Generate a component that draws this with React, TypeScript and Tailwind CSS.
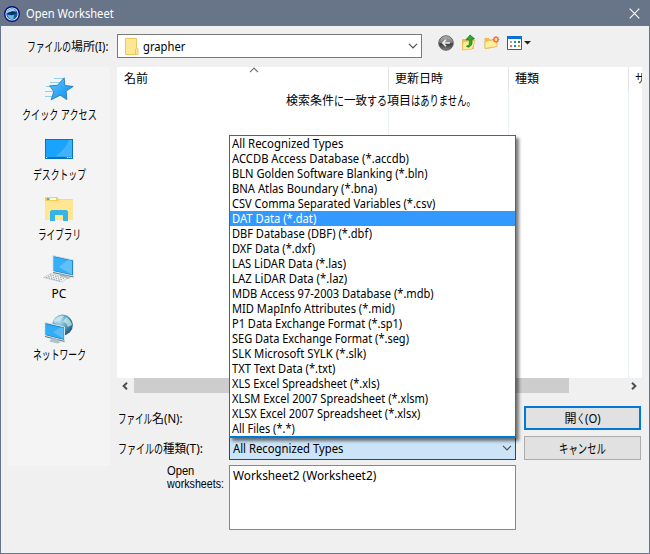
import { useLayoutEffect, useRef, useState, type ReactNode } from "react";

/** Single line of text condensed or widened horizontally to a given width. */
function Fit({ w, children, className = "" }: { w: number; children: ReactNode; className?: string }) {
  const ref = useRef<HTMLSpanElement>(null);
  const [scale, setScale] = useState(1);
  useLayoutEffect(() => {
    if (ref.current) setScale(w / ref.current.offsetWidth);
  }, [w]);
  return (
    <span className={"block shrink-0 whitespace-pre " + className} style={{ width: w }}>
      <span ref={ref} className="inline-block origin-left" style={{ transform: `scaleX(${scale})` }}>
        {children}
      </span>
    </span>
  );
}

const fileTypes: [string, number][] = [
  ["All Recognized Types", 111],
  ["ACCDB Access Database (*.accdb)", 177],
  ["BLN Golden Software Blanking (*.bln)", 196],
  ["BNA Atlas Boundary (*.bna)", 145],
  ["CSV Comma Separated Variables (*.csv)", 203],
  ["DAT Data (*.dat)", 84],
  ["DBF Database (DBF) (*.dbf)", 140],
  ["DXF Data (*.dxf)", 83],
  ["LAS LiDAR Data (*.las)", 114],
  ["LAZ LiDAR Data (*.laz)", 115],
  ["MDB Access 97-2003 Database (*.mdb)", 202],
  ["MID MapInfo Attributes (*.mid)", 163],
  ["P1 Data Exchange Format (*.sp1)", 170],
  ["SEG Data Exchange Format (*.seg)", 177],
  ["SLK Microsoft SYLK (*.slk)", 134],
  ["TXT Text Data (*.txt)", 103],
  ["XLS Excel Spreadsheet (*.xls)", 148],
  ["XLSM Excel 2007 Spreadsheet (*.xlsm)", 196],
  ["XLSX Excel 2007 Spreadsheet (*.xlsx)", 188],
  ["All Files (*.*)", 63],
];

function Chevron({ className = "" }: { className?: string }) {
  return (
    <svg className={className} width="10" height="6" viewBox="0 0 10 6" fill="none" stroke="#505050" strokeWidth="1.2">
      <path d="M1 .8 5 4.8 9 .8" />
    </svg>
  );
}

function ScrollArrow({ className = "" }: { className?: string }) {
  return (
    <svg className={className} width="6" height="8" viewBox="0 0 6 8" fill="none" stroke="#505050" strokeWidth="2">
      <path d="M5 .7 1.6 4 5 7.3" />
    </svg>
  );
}

function AppIcon() {
  return (
    <svg width="16" height="16" viewBox="0 0 16 16">
      <circle cx="8" cy="8" r="7.3" fill="#eaf7fc" stroke="#090a84" strokeWidth="1.4" />
      <circle cx="8" cy="8" r="5.7" fill="#155c9c" />
      <path d="M2.5 7C3.5 4 6 2.3 9 2.5L13 5.5 8 5 4 7.3Z" fill="#8fd0ec" />
      <path d="M3 7.6C5 5.6 9 5 13.2 7L9.6 8.2 8 9.4Z" fill="#07306a" />
      <path d="M3.4 9 8 9.3 10 8.8 9.4 13.2C6.5 13.6 4.2 12 3.4 9Z" fill="#69b9dd" />
    </svg>
  );
}

function StarIcon() {
  return (
    <svg width="32" height="26" viewBox="0 0 32 26">
      <defs>
        <linearGradient id="star" x1="0" y1="0" x2="1" y2="1">
          <stop offset="0" stopColor="#62c7ff" />
          <stop offset="1" stopColor="#078bea" />
        </linearGradient>
      </defs>
      <path d="M11 2.5H20M7 6.5H18M3 10.5H11M2 15.5H11M2 20.5H9" stroke="#8dc9ec" strokeWidth=".9" />
      <path d="M21.2 1.8 21.8 9.4 30.2 10.5 23.2 15.1 23.8 23.6 17.2 19.2 8.2 23.8 10.8 15.5 6.6 9.8 14.5 9.3Z" fill="url(#star)" stroke="#1576b9" strokeWidth=".8" />
    </svg>
  );
}

function DesktopIcon() {
  return (
    <svg width="28" height="20" viewBox="0 0 28 20">
      <rect x=".5" y=".5" width="27" height="19" fill="#19a3ff" stroke="#0875b9" />
      <path d="M10 17.5Q20 11 24 1H27V17.5Z" fill="#42b2fc" />
      <path d="M1 18.5H27" stroke="#0672b4" />
      <path d="M1 18.5H2.2M21.8 18.5H22.8M23.7 18.5H24.7M25.6 18.5H26.6" stroke="white" />
    </svg>
  );
}

function LibraryIcon() {
  return (
    <svg width="28" height="24" viewBox="0 0 28 24">
      <path d="M0 1Q0 0 1 0H12Q13 0 13.5 2H27Q28 2 28 3V22Q28 23 27 23H1Q0 23 0 22Z" fill="#f6cd57" />
      <path d="M2 1.2H11V3H2Z" fill="#fff" />
      <path d="M2 1.2H4.5V3H2Z" fill="#29aadd" />
      <path d="M0 4H13L15 2.5H27Q28 2.5 28 3.5V22Q28 23 27 23H0Z" fill="#ffe693" />
      <path d="M5 14.5 6.5 13H21.5L23 14.5V24H18V18H10V24H5Z" fill="#36b4e5" />
    </svg>
  );
}

function ComputerIcon() {
  return (
    <svg width="32" height="28" viewBox="0 0 32 28">
      <path d="M10 .5 30.5 5V21L10 16.5Z" fill="#2587c6" stroke="#dce5e9" />
      <path d="M11 2 29 6V19.5L11 15.5Z" fill="#35aff8" />
      <path d="M16 12 25 5 29 6V19.5Z" fill="#60c1fa" />
      <path d="M10 17 30.5 21.5V22.6L10 18.1Z" fill="#607884" />
      <path d="M18 19.2 24 20.5V22L28 22.8 25 24 16 21.6Z" fill="#a2b4bb" />
      <path d="M8 18.5 24.5 23 19 27 .5 22.5Z" fill="#f8fafa" stroke="#acb7bb" strokeWidth=".6" />
      <path d="M7 19.8 22 23.8M5 21.1 20 25.1M3 22.3 18 26.3" stroke="#929fa5" strokeDasharray="1.6 1" />
    </svg>
  );
}

function NetworkIcon() {
  return (
    <svg width="30" height="30" viewBox="0 0 30 30">
      <defs>
        <radialGradient id="globe" cx=".35" cy=".3" r=".7">
          <stop offset="0" stopColor="#b8e4f2" />
          <stop offset=".55" stopColor="#55a6c5" />
          <stop offset="1" stopColor="#245f83" />
        </radialGradient>
      </defs>
      <circle cx="18.5" cy="11" r="10.4" fill="url(#globe)" />
      <path d="M12 4Q16 1 20 2L18 5 14 7 11 9 9 7ZM22 3Q27 6 28 11L24 13 22 9 19 8Z" fill="#deeff0" opacity=".65" />
      <path d="M1 8.5 20.5 13V26.5L1 21.5Z" fill="#1775ba" stroke="#d9e5e9" />
      <path d="M2 10 19.5 14V25L2 20.8Z" fill="#32adf5" />
      <path d="M9 18 17 13.5 19.5 14V25Z" fill="#5abbf5" />
      <path d="M1 22 20.5 27V28L1 23Z" fill="#557785" />
      <path d="M8 24 14 25.5V27L17 28 14 29.5 5 27.5Z" fill="#b2c1c7" />
    </svg>
  );
}

function ToolbarIcons() {
  return (
    <div className="ml-[16px] flex items-start">
      <svg width="16" height="16" viewBox="0 0 16 16" className="mt-[9px]">
        <defs>
          <linearGradient id="back" x1="0" y1="0" x2="0" y2="1">
            <stop offset="0" stopColor="#b5b5b5" />
            <stop offset=".48" stopColor="#7c7c7c" />
            <stop offset=".55" stopColor="#383838" />
            <stop offset="1" stopColor="#858585" />
          </linearGradient>
        </defs>
        <circle cx="8" cy="8" r="7.3" fill="url(#back)" stroke="#5c5c5c" strokeWidth=".9" />
        <path d="M8 4.8 4.8 8 8 11.2M4.8 8H12" fill="none" stroke="#eee" strokeWidth="1.6" />
      </svg>
      <svg width="15" height="17" viewBox="0 0 15 17" className="ml-[7px] mt-[8px]">
        <path d="M1 5H5L6 4H13V15H1Z" fill="#e7bd55" />
        <path d="M2 8 9 6.5H14L11.5 15 1.5 16Z" fill="#ffec9b" stroke="#dfb74e" strokeWidth=".7" />
        <path d="M5.5 12Q9.5 12 8 5.8H5L9 1 13.5 4.7 11 5.4Q12 12.5 6.8 13.3Z" fill="#35a535" stroke="#087816" strokeWidth=".7" />
      </svg>
      <svg width="16" height="15" viewBox="0 0 16 15" className="ml-[8px] mt-[9px]">
        <path d="M.5 3H5L6.3 4.5H12V12L2 14 .5 12.5Z" fill="#e9bd57" />
        <path d="M1 13.5V7L5 5.5 13 5V11.5Z" fill="#ffed9b" stroke="#dfb65a" strokeWidth=".7" />
        <path d="M12 1V8M8.7 4.5H15.3M9.7 2.2 14.3 6.8M14.3 2.2 9.7 6.8" stroke="#ff552b" strokeWidth="1.3" />
        <circle cx="12" cy="4.5" r="1.5" fill="#fff1b2" />
      </svg>
      <svg width="24" height="15" viewBox="0 0 24 15" className="ml-[7px] mt-[10px]">
        <path d="M.5.5H14.5V13.5H.5Z" fill="#fff" stroke="#0864c9" />
        <path d="M0 0H15V3H0Z" fill="#0a73d8" />
        <path d="M3 5H5V7H3Z" fill="#aaa0b6" />
        <path d="M7 5H9V7H7ZM7 9H9V11H7Z" fill="#277bd2" />
        <path d="M11 5H13V7H11Z" fill="#24862f" />
        <path d="M3 9H5V11H3Z" fill="#f46f43" />
        <path d="M11 9H13V11H11Z" fill="#d4a91e" />
        <path d="M17 5H24L20.5 8.5Z" fill="#222" />
      </svg>
    </div>
  );
}

function Place({ icon, label, w }: { icon: ReactNode; label: string; w: number }) {
  return (
    <div className="flex h-[60px] flex-col items-center">
      <div className="flex h-[32px] items-center justify-center">{icon}</div>
      <Fit w={w} className={label === "PC" ? "h-[18px] leading-[18px]" : "h-[18px] text-[13px] leading-[18px]"}>{label}</Fit>
    </div>
  );
}

export default function App() {
  return (
    <div className="flex h-[554px] w-[650px] flex-col overflow-hidden border border-[#687589] bg-[#f0f0f0] font-['Noto_Sans','Noto_Sans_CJK_JP',sans-serif] text-[12px] leading-[15px] text-black">
      <header className="flex h-[25px] shrink-0 items-center bg-[#687589] pl-[3px] text-white">
        <AppIcon />
        <Fit w={88} className="ml-[6px]">Open Worksheet</Fit>
        <svg width="11" height="11" viewBox="0 0 11 11" className="ml-auto mr-[9px]" stroke="#fff" strokeWidth="1.1">
          <path d="M.7.7 10.3 10.3M10.3.7.7 10.3" />
        </svg>
      </header>

      <div className="flex h-[41px] shrink-0">
        <div className="flex w-[116px] pl-[26px] pt-[13px]">
          <Fit w={44} className="text-[13px]">ファイルの</Fit>
          <Fit w={24}>場所</Fit>
          <Fit w={13}>(I):</Fit>
        </div>
        <div className="mt-[8px] flex h-[24px] w-[305px] items-center border border-[#7a7a7a] bg-white pl-[7px] pr-[3px]">
          <svg width="14" height="17" viewBox="0 0 14 17">
            <path d="M.5.5H11.5V10.5H13V16.5H.5Z" fill="#ffe694" stroke="#edc75c" />
            <path d="M10.5 11V16" stroke="#edc75c" />
          </svg>
          <Fit w={42} className="ml-[4px]">grapher</Fit>
          <Chevron className="ml-auto" />
        </div>
        <ToolbarIcons />
      </div>

      <div className="flex flex-1 gap-[7px] pl-[7px]">
        <aside className="h-[399px] w-[102px] shrink-0 bg-[#f4f4f4] pt-[6px]">
          <Place icon={<StarIcon />} label="クイック アクセス" w={75} />
          <Place icon={<DesktopIcon />} label="デスクトップ" w={53} />
          <Place icon={<LibraryIcon />} label="ライブラリ" w={43} />
          <Place icon={<ComputerIcon />} label="PC" w={15} />
          <Place icon={<NetworkIcon />} label="ネットワーク" w={53} />
        </aside>

        <main className="w-[525px] shrink-0">
          <div className="grid h-[311px] grid-cols-[272px_120px_120px_13px] grid-rows-[24px_287px] overflow-hidden bg-white">
            <div className="relative border-r border-[#e5e5e5] pl-[7px] pt-[4px]">
              <Fit w={24}>名前</Fit>
              <Chevron className="absolute left-[132px] top-0 rotate-180 opacity-80" />
            </div>
            <div className="border-r border-[#e5e5e5] pl-[6px] pt-[4px]"><Fit w={48}>更新日時</Fit></div>
            <div className="border-r border-[#e5e5e5] pl-[6px] pt-[4px]"><Fit w={24}>種類</Fit></div>
            <div className="overflow-hidden pl-[6px] pt-[4px]"><Fit w={10}>サ</Fit></div>
            <div className="relative border-r border-[#eaf2fc]">
              <div className="absolute left-[169px] top-[2px] flex">
                <Fit w={48}>検索条件</Fit>
                <Fit w={10} className="text-[13px]">に</Fit>
                <Fit w={23}>一致</Fit>
                <Fit w={20} className="text-[13px]">する</Fit>
                <Fit w={24}>項目</Fit>
                <Fit w={65} className="text-[13px]">はありません。</Fit>
              </div>
            </div>
            <div className="border-r border-[#eaf2fc]" />
            <div className="border-r border-[#eaf2fc]" />
          </div>

          <div className="flex h-[15px] items-center pl-[5px] pr-[5px]">
            <ScrollArrow />
            <div className="ml-[6px] h-[15px] w-[435px] bg-[#cdcdcd]" />
            <ScrollArrow className="ml-auto rotate-180" />
          </div>

          <div className="mt-[13px] flex h-[24px]">
            <div className="flex w-[407px] pl-px pt-[5px]">
              <Fit w={34} className="text-[13px]">ファイル</Fit>
              <Fit w={12}>名</Fit>
              <Fit w={19}>(N):</Fit>
            </div>
            <button className="flex h-[24px] w-[117px] justify-center border-2 border-[#0078d7] bg-[#e1e1e1] pt-[3px]">
              <Fit w={12}>開</Fit>
              <Fit w={8} className="text-[13px]">く</Fit>
              <Fit w={16}>(O)</Fit>
            </button>
          </div>

          <div className="mt-[6px] flex h-[24px]">
            <div className="flex w-[112px] pl-px pt-[5px]">
              <Fit w={45} className="text-[13px]">ファイルの</Fit>
              <Fit w={23}>種類</Fit>
              <Fit w={17}>(T):</Fit>
            </div>
            <div className="relative flex h-[24px] w-[287px] items-center border border-[#005499] bg-[#cce4f7] pl-[3px] pr-[3px]">
              <Fit w={110}>All Recognized Types</Fit>
              <Chevron className="ml-auto" />
              <ul className="absolute -left-px bottom-[21px] w-[287px] border border-b-2 border-[#0078d7] bg-white shadow-[3px_3px_3px_rgba(0,0,0,0.5)]">
                {fileTypes.map(([label, w], i) => (
                  <li key={label} className={i === 5 ? "h-[15px] bg-[#3399ff] pl-[2px] text-white" : "h-[15px] pl-[2px]"}>
                    <Fit w={w}>{label}</Fit>
                  </li>
                ))}
              </ul>
            </div>
            <button className="ml-[8px] flex h-[24px] w-[117px] justify-center border border-[#adadad] bg-[#e1e1e1] pt-[4px]">
              <Fit w={47} className="text-[13px]">キャンセル</Fit>
            </button>
          </div>

          <div className="mt-[5px] flex">
            <div className="w-[112px] pl-[50px] font-['Liberation_Sans',sans-serif] text-[12px] leading-[13px]">
              <Fit w={27}>Open</Fit>
              <Fit w={57}>worksheets:</Fit>
            </div>
            <div className="h-[65px] w-[287px] border border-[#828790] bg-white pl-[3px] pt-[2px]">
              <Fit w={143}>Worksheet2 (Worksheet2)</Fit>
            </div>
          </div>
        </main>
      </div>
    </div>
  );
}
